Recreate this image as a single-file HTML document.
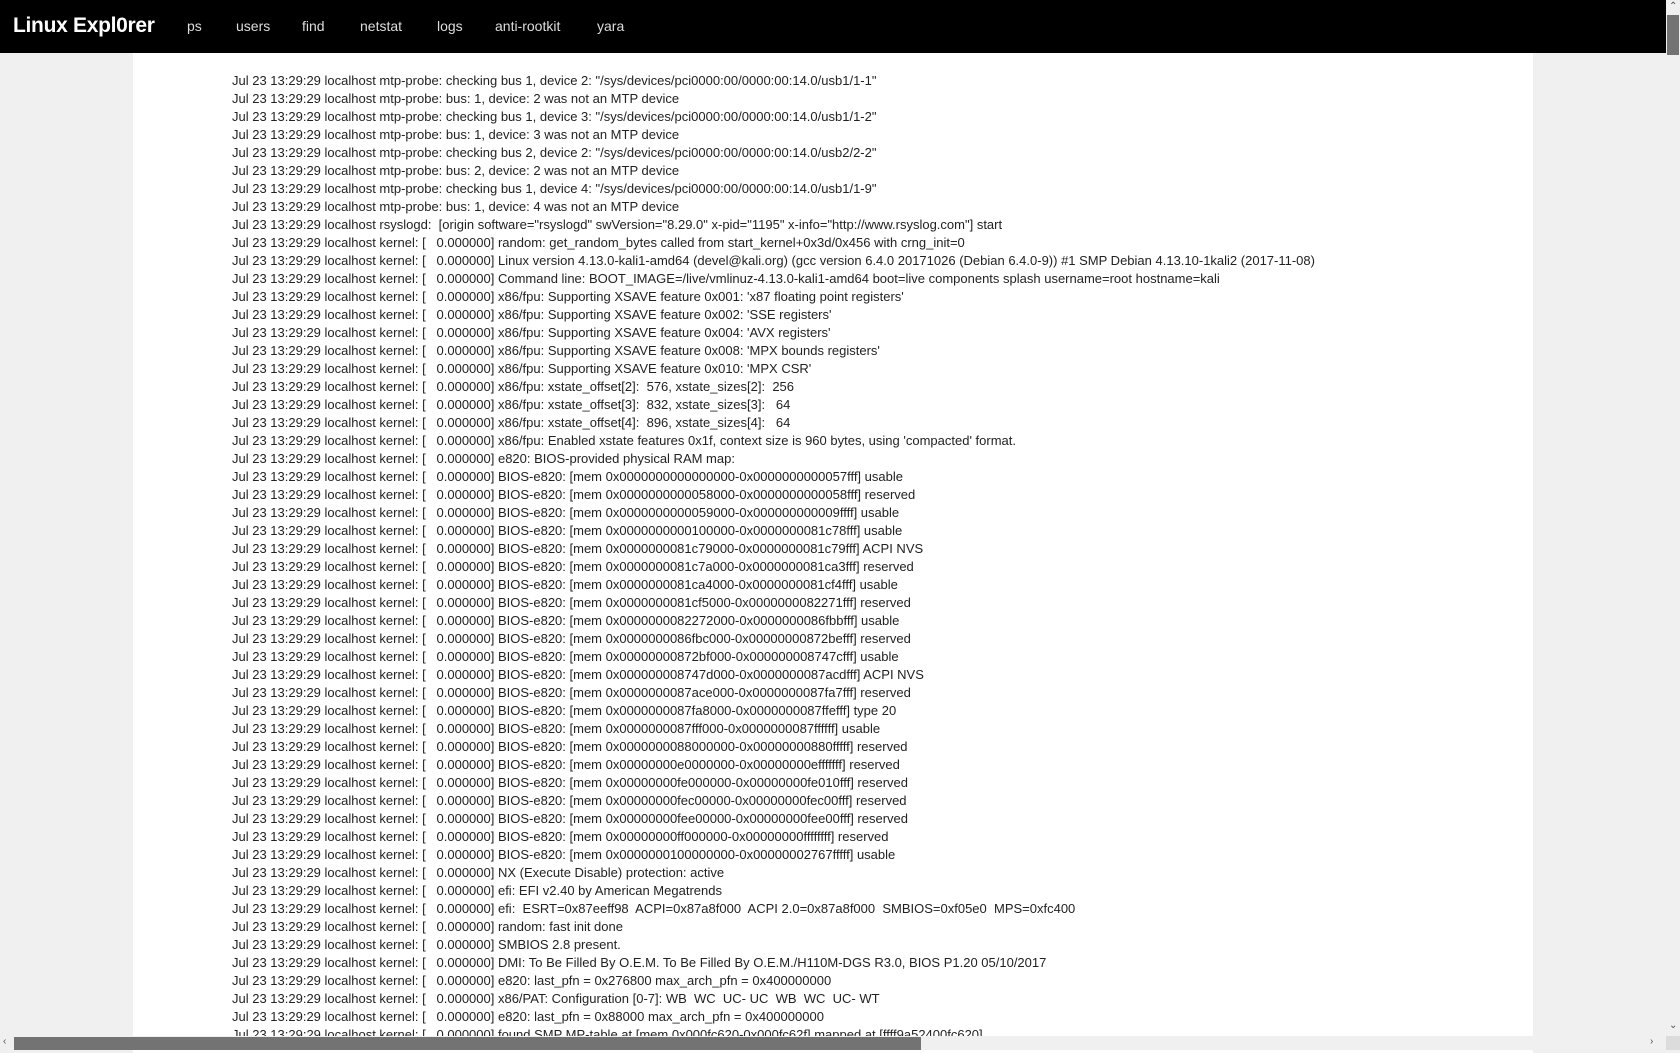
<!DOCTYPE html>
<html><head><meta charset="utf-8"><style>
html,body{margin:0;padding:0;width:1680px;height:1050px;overflow:hidden;background:#f0f0f0;font-family:"Liberation Sans",sans-serif}
.nav{position:absolute;left:0;top:0;width:1666px;height:53px;background:#000;color:#fff}
.nav .t{position:absolute;left:13px;top:14px;font-size:21px;font-weight:bold;letter-spacing:-0.3px}
.nav a{position:absolute;top:18px;font-size:14px;color:#ddd;text-decoration:none}
.panel{position:absolute;left:133px;top:53px;width:1400px;height:1000px;background:#fff}
pre{position:absolute;left:232px;top:72px;margin:0;font-family:"Liberation Sans",sans-serif;font-size:13px;line-height:18px;color:#222;white-space:pre}
.vs{position:absolute;left:1666px;top:0;width:14px;height:1036px;background:#f0f0f0}
.vs .th{position:absolute;left:1px;top:15px;width:12px;height:40px;background:#737373}
.hs{position:absolute;left:0;top:1036px;width:1666px;height:14px;background:#f0f0f0}
.hs .th{position:absolute;left:14px;top:1px;width:907px;height:13px;background:#737373}
.corner{position:absolute;left:1666px;top:1036px;width:14px;height:14px;background:#dcdcdc}
.ar{position:absolute;font-size:10px;color:#505050}
</style></head><body>
<div class="panel"></div>
<pre>Jul 23 13:29:29 localhost mtp-probe: checking bus 1, device 2: "/sys/devices/pci0000:00/0000:00:14.0/usb1/1-1"
Jul 23 13:29:29 localhost mtp-probe: bus: 1, device: 2 was not an MTP device
Jul 23 13:29:29 localhost mtp-probe: checking bus 1, device 3: "/sys/devices/pci0000:00/0000:00:14.0/usb1/1-2"
Jul 23 13:29:29 localhost mtp-probe: bus: 1, device: 3 was not an MTP device
Jul 23 13:29:29 localhost mtp-probe: checking bus 2, device 2: "/sys/devices/pci0000:00/0000:00:14.0/usb2/2-2"
Jul 23 13:29:29 localhost mtp-probe: bus: 2, device: 2 was not an MTP device
Jul 23 13:29:29 localhost mtp-probe: checking bus 1, device 4: "/sys/devices/pci0000:00/0000:00:14.0/usb1/1-9"
Jul 23 13:29:29 localhost mtp-probe: bus: 1, device: 4 was not an MTP device
Jul 23 13:29:29 localhost rsyslogd:  [origin software="rsyslogd" swVersion="8.29.0" x-pid="1195" x-info="http://www.rsyslog.com"] start
Jul 23 13:29:29 localhost kernel: [   0.000000] random: get_random_bytes called from start_kernel+0x3d/0x456 with crng_init=0
Jul 23 13:29:29 localhost kernel: [   0.000000] Linux version 4.13.0-kali1-amd64 (devel@kali.org) (gcc version 6.4.0 20171026 (Debian 6.4.0-9)) #1 SMP Debian 4.13.10-1kali2 (2017-11-08)
Jul 23 13:29:29 localhost kernel: [   0.000000] Command line: BOOT_IMAGE=/live/vmlinuz-4.13.0-kali1-amd64 boot=live components splash username=root hostname=kali
Jul 23 13:29:29 localhost kernel: [   0.000000] x86/fpu: Supporting XSAVE feature 0x001: 'x87 floating point registers'
Jul 23 13:29:29 localhost kernel: [   0.000000] x86/fpu: Supporting XSAVE feature 0x002: 'SSE registers'
Jul 23 13:29:29 localhost kernel: [   0.000000] x86/fpu: Supporting XSAVE feature 0x004: 'AVX registers'
Jul 23 13:29:29 localhost kernel: [   0.000000] x86/fpu: Supporting XSAVE feature 0x008: 'MPX bounds registers'
Jul 23 13:29:29 localhost kernel: [   0.000000] x86/fpu: Supporting XSAVE feature 0x010: 'MPX CSR'
Jul 23 13:29:29 localhost kernel: [   0.000000] x86/fpu: xstate_offset[2]:  576, xstate_sizes[2]:  256
Jul 23 13:29:29 localhost kernel: [   0.000000] x86/fpu: xstate_offset[3]:  832, xstate_sizes[3]:   64
Jul 23 13:29:29 localhost kernel: [   0.000000] x86/fpu: xstate_offset[4]:  896, xstate_sizes[4]:   64
Jul 23 13:29:29 localhost kernel: [   0.000000] x86/fpu: Enabled xstate features 0x1f, context size is 960 bytes, using 'compacted' format.
Jul 23 13:29:29 localhost kernel: [   0.000000] e820: BIOS-provided physical RAM map:
Jul 23 13:29:29 localhost kernel: [   0.000000] BIOS-e820: [mem 0x0000000000000000-0x0000000000057fff] usable
Jul 23 13:29:29 localhost kernel: [   0.000000] BIOS-e820: [mem 0x0000000000058000-0x0000000000058fff] reserved
Jul 23 13:29:29 localhost kernel: [   0.000000] BIOS-e820: [mem 0x0000000000059000-0x000000000009ffff] usable
Jul 23 13:29:29 localhost kernel: [   0.000000] BIOS-e820: [mem 0x0000000000100000-0x0000000081c78fff] usable
Jul 23 13:29:29 localhost kernel: [   0.000000] BIOS-e820: [mem 0x0000000081c79000-0x0000000081c79fff] ACPI NVS
Jul 23 13:29:29 localhost kernel: [   0.000000] BIOS-e820: [mem 0x0000000081c7a000-0x0000000081ca3fff] reserved
Jul 23 13:29:29 localhost kernel: [   0.000000] BIOS-e820: [mem 0x0000000081ca4000-0x0000000081cf4fff] usable
Jul 23 13:29:29 localhost kernel: [   0.000000] BIOS-e820: [mem 0x0000000081cf5000-0x0000000082271fff] reserved
Jul 23 13:29:29 localhost kernel: [   0.000000] BIOS-e820: [mem 0x0000000082272000-0x0000000086fbbfff] usable
Jul 23 13:29:29 localhost kernel: [   0.000000] BIOS-e820: [mem 0x0000000086fbc000-0x00000000872befff] reserved
Jul 23 13:29:29 localhost kernel: [   0.000000] BIOS-e820: [mem 0x00000000872bf000-0x000000008747cfff] usable
Jul 23 13:29:29 localhost kernel: [   0.000000] BIOS-e820: [mem 0x000000008747d000-0x0000000087acdfff] ACPI NVS
Jul 23 13:29:29 localhost kernel: [   0.000000] BIOS-e820: [mem 0x0000000087ace000-0x0000000087fa7fff] reserved
Jul 23 13:29:29 localhost kernel: [   0.000000] BIOS-e820: [mem 0x0000000087fa8000-0x0000000087ffefff] type 20
Jul 23 13:29:29 localhost kernel: [   0.000000] BIOS-e820: [mem 0x0000000087fff000-0x0000000087ffffff] usable
Jul 23 13:29:29 localhost kernel: [   0.000000] BIOS-e820: [mem 0x0000000088000000-0x00000000880fffff] reserved
Jul 23 13:29:29 localhost kernel: [   0.000000] BIOS-e820: [mem 0x00000000e0000000-0x00000000efffffff] reserved
Jul 23 13:29:29 localhost kernel: [   0.000000] BIOS-e820: [mem 0x00000000fe000000-0x00000000fe010fff] reserved
Jul 23 13:29:29 localhost kernel: [   0.000000] BIOS-e820: [mem 0x00000000fec00000-0x00000000fec00fff] reserved
Jul 23 13:29:29 localhost kernel: [   0.000000] BIOS-e820: [mem 0x00000000fee00000-0x00000000fee00fff] reserved
Jul 23 13:29:29 localhost kernel: [   0.000000] BIOS-e820: [mem 0x00000000ff000000-0x00000000ffffffff] reserved
Jul 23 13:29:29 localhost kernel: [   0.000000] BIOS-e820: [mem 0x0000000100000000-0x00000002767fffff] usable
Jul 23 13:29:29 localhost kernel: [   0.000000] NX (Execute Disable) protection: active
Jul 23 13:29:29 localhost kernel: [   0.000000] efi: EFI v2.40 by American Megatrends
Jul 23 13:29:29 localhost kernel: [   0.000000] efi:  ESRT=0x87eeff98  ACPI=0x87a8f000  ACPI 2.0=0x87a8f000  SMBIOS=0xf05e0  MPS=0xfc400
Jul 23 13:29:29 localhost kernel: [   0.000000] random: fast init done
Jul 23 13:29:29 localhost kernel: [   0.000000] SMBIOS 2.8 present.
Jul 23 13:29:29 localhost kernel: [   0.000000] DMI: To Be Filled By O.E.M. To Be Filled By O.E.M./H110M-DGS R3.0, BIOS P1.20 05/10/2017
Jul 23 13:29:29 localhost kernel: [   0.000000] e820: last_pfn = 0x276800 max_arch_pfn = 0x400000000
Jul 23 13:29:29 localhost kernel: [   0.000000] x86/PAT: Configuration [0-7]: WB  WC  UC- UC  WB  WC  UC- WT
Jul 23 13:29:29 localhost kernel: [   0.000000] e820: last_pfn = 0x88000 max_arch_pfn = 0x400000000
Jul 23 13:29:29 localhost kernel: [   0.000000] found SMP MP-table at [mem 0x000fc620-0x000fc62f] mapped at [ffff9a52400fc620]</pre>
<div class="nav"><span class="t">Linux Expl0rer</span>
<a style="left:187px">ps</a><a style="left:236px">users</a><a style="left:302px">find</a><a style="left:360px">netstat</a><a style="left:437px">logs</a><a style="left:495px">anti-rootkit</a><a style="left:597px">yara</a></div>
<div class="vs"><div class="th"></div><span class="ar" style="left:3px;top:1px">&#8963;</span><span class="ar" style="left:3px;top:1020px">&#8964;</span></div>
<div class="hs"><div class="th"></div><span class="ar" style="left:1650px;top:0">&#8250;</span><span class="ar" style="left:3px;top:0">&#8249;</span></div>
<div class="corner"></div>
</body></html>
